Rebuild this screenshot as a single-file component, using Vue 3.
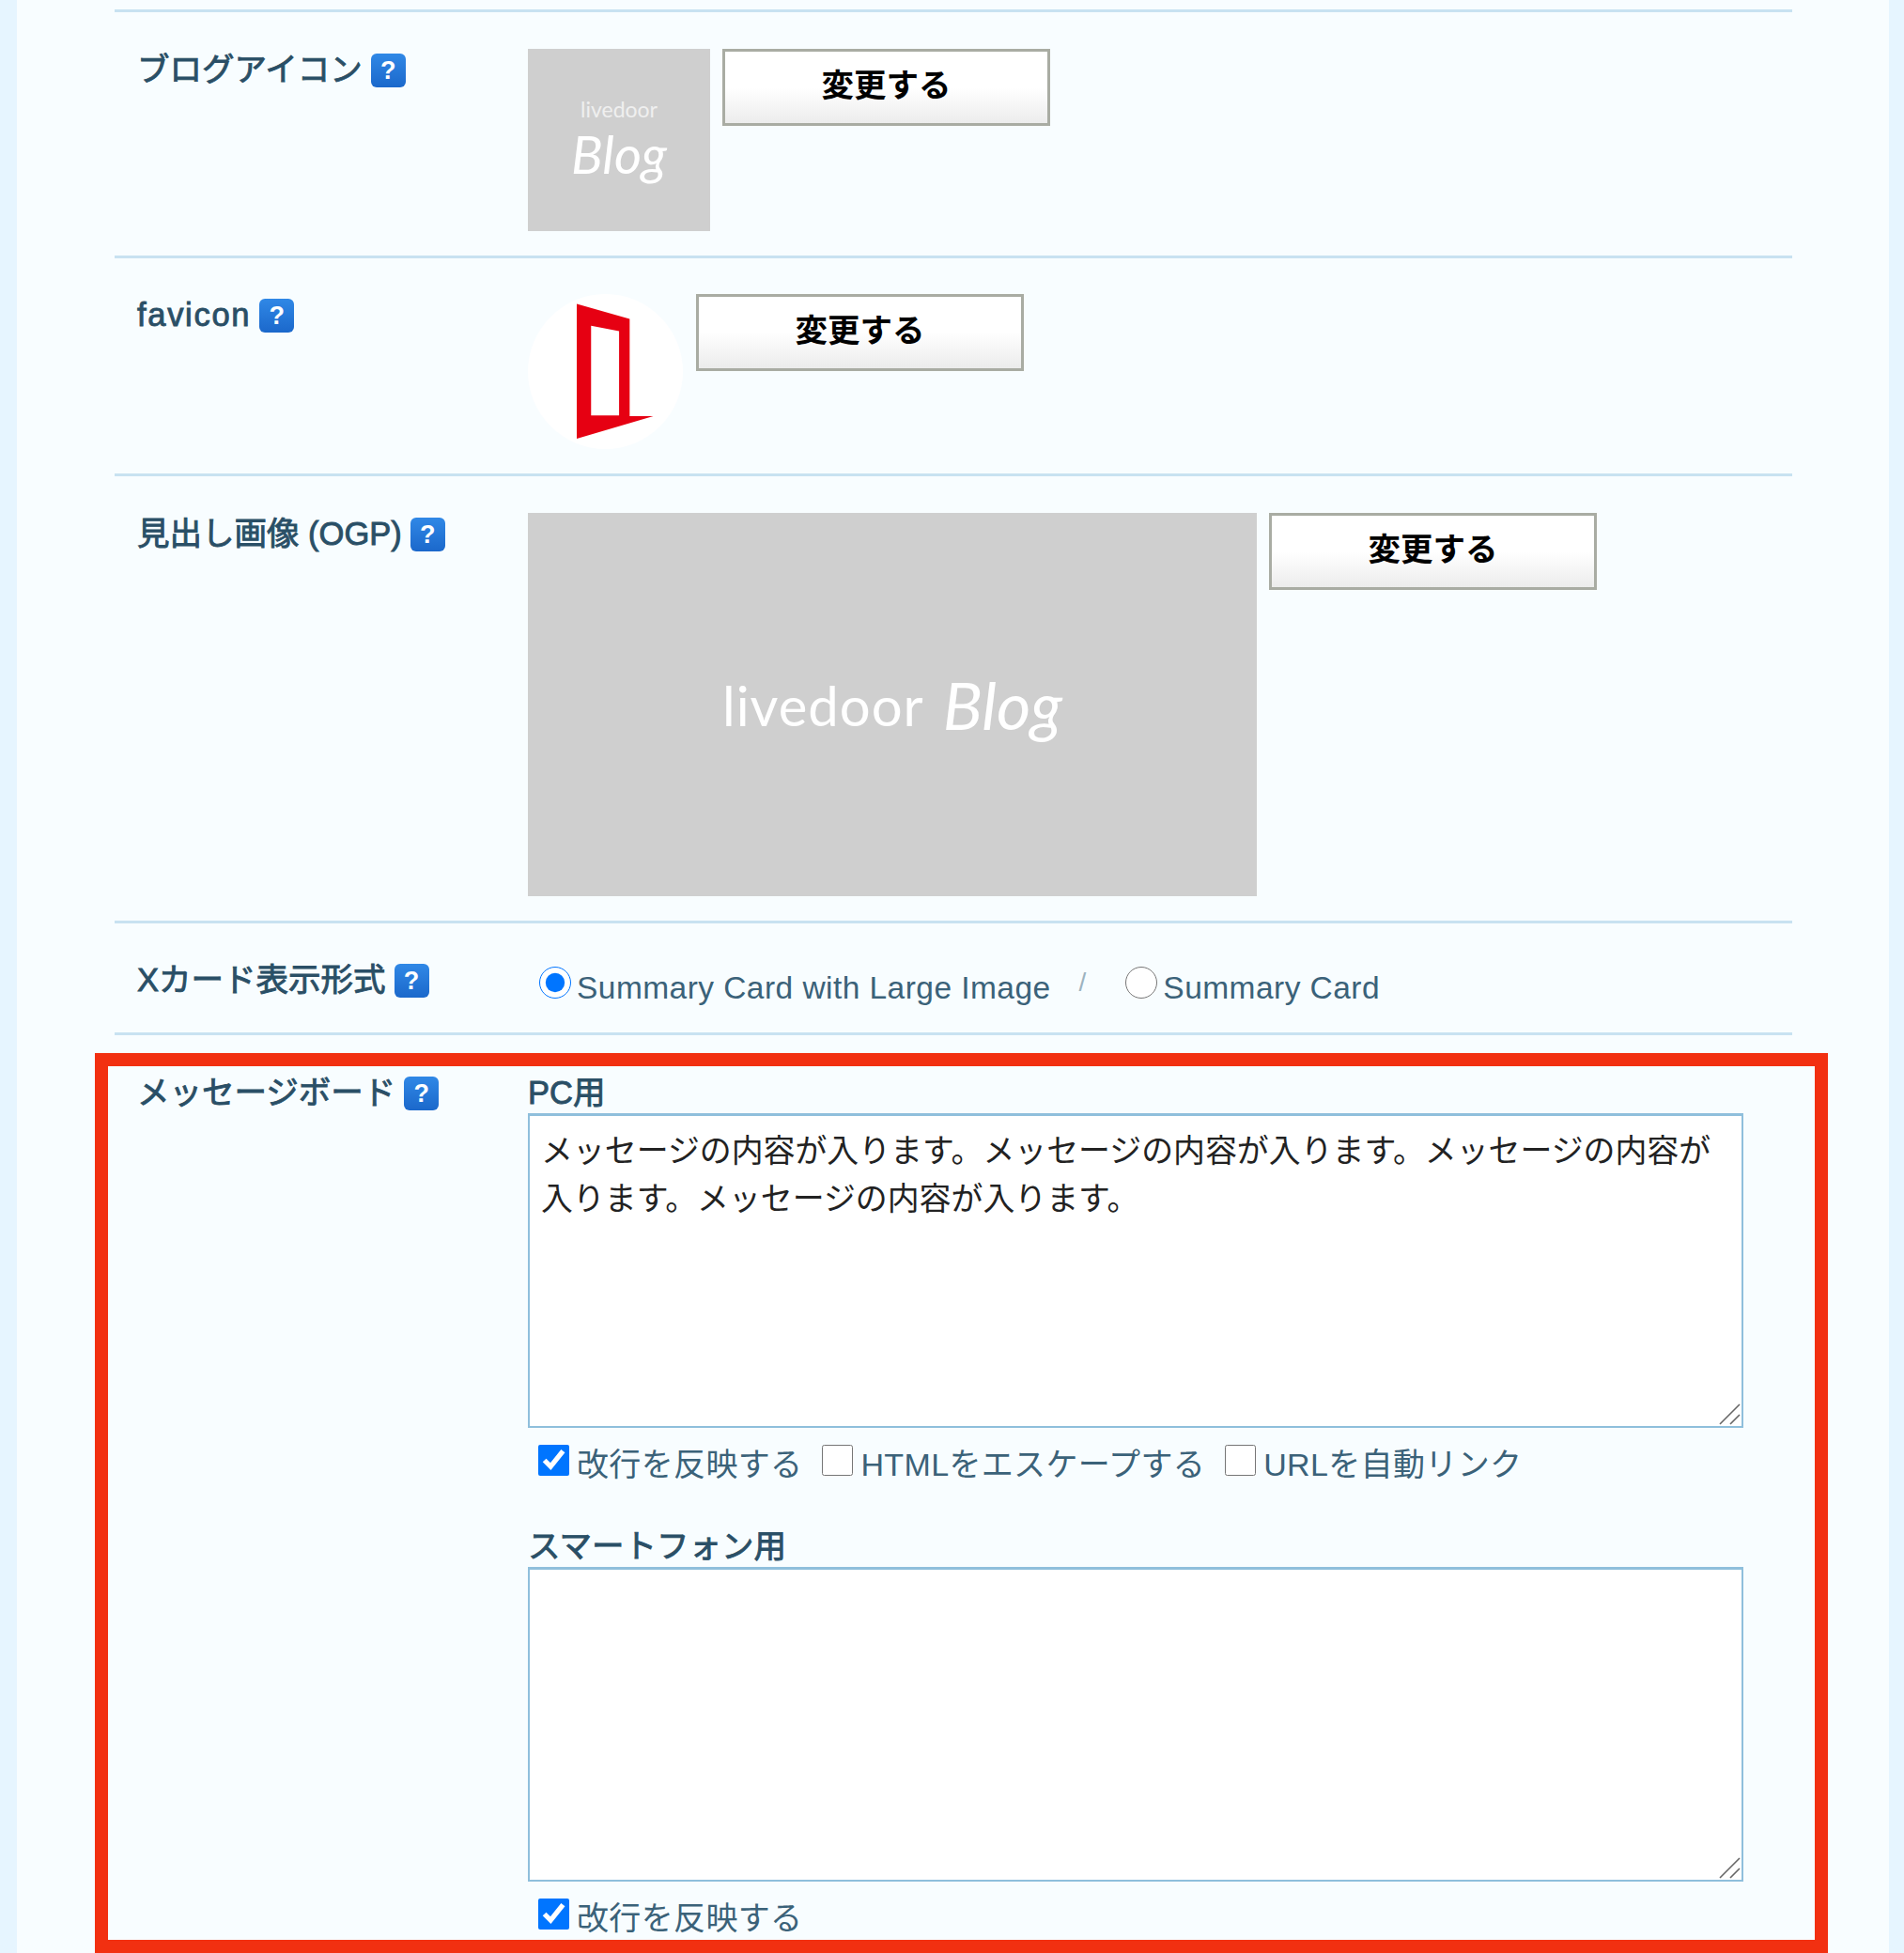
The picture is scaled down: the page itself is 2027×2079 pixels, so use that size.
<script setup>
import { ref } from 'vue';

const pcMessage = ref('メッセージの内容が入ります。メッセージの内容が入ります。メッセージの内容が入ります。メッセージの内容が入ります。');
const spMessage = ref('');
const cardType = ref('large');
</script>
<template>
    <div class="panel">
        <div class="row row-icon">
            <div class="row-label">ブログアイコン<span class="help">?</span></div>
            <div class="row-value">
                <div class="thumb thumb-small">
                    <span class="brand-small">livedoor</span>
                    <span class="blog-small">Blog</span>
                </div>
                <button class="change-button">変更する</button>
            </div>
        </div>

        <div class="row row-favicon">
            <div class="row-label"><span class="latin-label">favicon</span><span class="help">?</span></div>
            <div class="row-value">
                <div class="favicon">
                    <svg viewBox="0 0 498 498" width="165" height="165">
                        <path fill="#e60012" fill-rule="evenodd" d="M157 32 L327 80 L327 392 L403 392 L157 465 Z M203 102 L203 390 L293 390 L293 119 Z" />
                    </svg>
                </div>
                <button class="change-button button-favicon">変更する</button>
            </div>
        </div>

        <div class="row row-ogp">
            <div class="row-label">見出し画像 (OGP)<span class="help">?</span></div>
            <div class="row-value">
                <div class="thumb thumb-large">
                    <span class="brand-large">livedoor</span>
                    <span class="blog-large">Blog</span>
                </div>
                <button class="change-button">変更する</button>
            </div>
        </div>

        <div class="row row-card">
            <div class="row-label">Xカード表示形式<span class="help">?</span></div>
            <div class="row-value card-options">
                <label class="option">
                    <input type="radio" value="large" v-model="cardType">
                    <span>Summary Card with Large Image</span>
                </label>
                <span class="slash">/</span>
                <label class="option">
                    <input type="radio" value="summary" v-model="cardType">
                    <span>Summary Card</span>
                </label>
            </div>
        </div>

        <div class="row-end"></div>

        <div class="message-board">
            <div class="row-label">メッセージボード<span class="help">?</span></div>
            <div class="message-fields">
                <div class="field-title">PC用</div>
                <div class="area-wrap">
                    <textarea class="message-area" v-model="pcMessage"></textarea>
                    <svg class="grip" viewBox="0 0 24 24" width="24" height="24">
                        <path d="M2 23 L23 2 M13 23 L23 13" stroke="#666" stroke-width="1.6" fill="none" />
                    </svg>
                </div>
                <div class="check-row">
                    <label class="check"><input type="checkbox" checked><span>改行を反映する</span></label>
                    <label class="check"><input type="checkbox"><span>HTMLをエスケープする</span></label>
                    <label class="check"><input type="checkbox"><span>URLを自動リンク</span></label>
                </div>

                <div class="field-title title-second">スマートフォン用</div>
                <div class="area-wrap">
                    <textarea class="message-area" v-model="spMessage"></textarea>
                    <svg class="grip" viewBox="0 0 24 24" width="24" height="24">
                        <path d="M2 23 L23 2 M13 23 L23 13" stroke="#666" stroke-width="1.6" fill="none" />
                    </svg>
                </div>
                <div class="check-row">
                    <label class="check"><input type="checkbox" checked><span>改行を反映する</span></label>
                </div>
            </div>
        </div>
    </div>
</template>
<style>
html,
body {
    margin: 0;
    background-color: #e6f5ff;
}
</style>
<style scoped>
.panel {
    box-sizing: border-box;
    height: 2079px;
    margin: 0 16px 0 18px;
    padding: 10px 103px 0 104px;
    overflow: hidden;
    background-color: #f8fdff;
    font-family: "Liberation Sans", "Noto Sans CJK JP", sans-serif;
    font-size: 34px;
    color: #2a4f66;
}

.row {
    display: flex;
    border-top: 3px solid #c8e2f1;
}

.row-icon {
    padding: 39px 0 26px;
}

.row-favicon {
    padding: 38px 0 26px;
}

.row-ogp {
    padding: 39px 0 26px;
}

.row-card {
    padding: 38px 0 34px;
    height: 44px;
}

.row-end {
    border-top: 3px solid #c8e2f1;
}

.row-label {
    box-sizing: border-box;
    flex: 0 0 440px;
    padding-left: 24px;
    font-size: 34.5px;
    line-height: 44px;
    -webkit-text-stroke: 0.9px #2a4f66;
}

.latin-label {
    letter-spacing: 1.7px;
}

.row-value {
    display: flex;
    align-items: flex-start;
}

.help {
    display: inline-block;
    width: 37px;
    height: 36px;
    margin-left: 9px;
    border-radius: 6px;
    background: linear-gradient(#3088e6, #1b68cb);
    color: #fff;
    font-size: 27px;
    font-weight: bold;
    line-height: 36px;
    text-align: center;
    vertical-align: 2px;
    -webkit-text-stroke: 0;
}

.thumb {
    display: flex;
    flex-shrink: 0;
    align-items: center;
    justify-content: center;
    background-color: #cfcfcf;
    color: #fff;
    font-family: Lato, "Open Sans", sans-serif;
}

.thumb-small {
    box-sizing: border-box;
    flex-direction: column;
    width: 194px;
    height: 194px;
    padding-top: 6px;
}

.brand-small {
    font-size: 23px;
    line-height: 24px;
    color: #efefef;
}

.blog-small {
    font-size: 56px;
    font-style: italic;
    line-height: 72px;
}

.thumb-large {
    gap: 20px;
    width: 776px;
    height: 408px;
}

.brand-large {
    font-size: 58px;
    letter-spacing: 1px;
}

.blog-large {
    font-size: 70px;
    font-style: italic;
}

.favicon {
    width: 165px;
    height: 165px;
    border-radius: 50%;
    background-color: #fff;
}

.favicon svg {
    display: block;
}

.change-button {
    box-sizing: border-box;
    width: 349px;
    height: 82px;
    margin-left: 13px;
    padding: 0 0 11px;
    border: 3px solid #a9aca3;
    border-radius: 0;
    background: linear-gradient(#fff 50%, #ececec);
    color: #000;
    font-family: inherit;
    font-size: 34.5px;
    font-weight: bold;
}

.button-favicon {
    margin-left: 14px;
}

.card-options {
    align-items: center;
    padding-left: 12px;
    margin-top: 3px;
    height: 44px;
    color: #3b6279;
}

.option {
    display: inline-flex;
    align-items: center;
    font-size: 33.5px;
    letter-spacing: 0.45px;
}

.option input {
    width: 34px;
    height: 34px;
    margin: 0 6px 0 0;
}

.option span {
    position: relative;
    top: 6px;
}

.slash {
    margin: 0 42px 0 30px;
    color: #9db3c0;
    font-size: 28px;
}

.message-board {
    display: flex;
    box-sizing: border-box;
    height: 958px;
    margin: 19px -38px 0 -21px;
    padding: 6px 0 0 7px;
    border: 14px solid #f23011;
}

.message-fields {
    width: 1294px;
}

.field-title {
    font-size: 34.5px;
    line-height: 44px;
    -webkit-text-stroke: 0.9px #2a4f66;
}

.title-second {
    margin-top: 45px;
}

.area-wrap {
    position: relative;
    height: 335px;
}

.message-area {
    display: block;
    box-sizing: border-box;
    width: 100%;
    height: 100%;
    padding: 12px 12px;
    border: 2px solid #8fbfdc;
    border-top-width: 3px;
    border-radius: 0;
    outline: none;
    resize: none;
    background-color: #fff;
    color: #222;
    font-family: inherit;
    font-size: 33.9px;
    line-height: 51px;
}

.grip {
    position: absolute;
    right: 3px;
    bottom: 3px;
}

.check-row {
    display: flex;
    gap: 21px;
    height: 50px;
    margin-top: 9px;
    padding-left: 11px;
    align-items: center;
}

.check {
    display: inline-flex;
    align-items: center;
    letter-spacing: 0.35px;
    color: #3b6279;
}

.check input {
    width: 33px;
    height: 33px;
    margin: 0 8px 0 0;
}

.check span {
    position: relative;
    top: 2px;
}
</style>
